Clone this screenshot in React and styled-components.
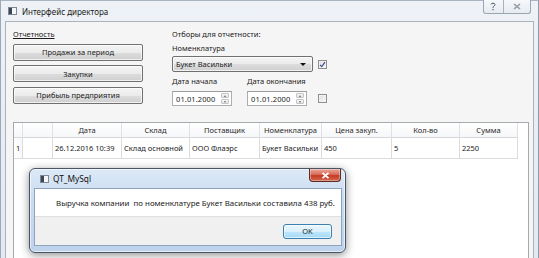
import React from 'react';
import styled, { createGlobalStyle } from 'styled-components';

const Global = createGlobalStyle`
  html, body { margin: 0; padding: 0; width: 539px; height: 258px; overflow: hidden; background: #fff; }
  body { font-family: "Noto Sans", "Open Sans", sans-serif; font-size: 7.5px; color: #1b1b1b; }
  * { box-sizing: border-box; }
`;

const Window = styled.div`
  position: relative;
  width: 539px;
  height: 258px;
  background: linear-gradient(180deg, #eef2f7 0%, #e2e9f1 100%);
  border-left: 1px solid #9aa8b8;
  border-right: 1px solid #8e9aa8;
  border-top: 1px solid #a9b5c3;
  padding: 0 4px 0 4px;
  display: flex;
  flex-direction: column;
`;

const TitleBar = styled.div`
  height: 20px;
  display: flex;
  align-items: center;
  flex-shrink: 0;
`;

const TitleIcon = styled.div`
  width: 9px;
  height: 8px;
  margin-left: 3px;
  margin-right: 5px;
  border: 1px solid #7d8894;
  background: linear-gradient(90deg, #3c4654 0 3px, #f4f6f8 3px);
`;

const TitleText = styled.span`
  font-size: 8px;
  color: #1a1a1a;
  margin-top: 1px;
`;

const TitleButtons = styled.div`
  margin-left: auto;
  margin-right: 3px;
  align-self: flex-start;
  margin-top: -1px;
  width: 48px;
  height: 14px;
  display: flex;
  border: 1px solid #9ba6b3;
  border-top: none;
  border-radius: 0 0 3px 3px;
  background: linear-gradient(180deg, #f6f8fa, #e6ebf0);
`;

const TitleBtn = styled.div`
  flex: ${p => p.$grow};
  display: flex;
  align-items: center;
  justify-content: center;
  border-right: ${p => (p.$divider ? '1px solid #a9b3bf' : 'none')};
`;

const Client = styled.div`
  flex: 1;
  background: #f5f5f5;
  border: 1px solid #a9b2bd;
  border-bottom: none;
  padding: 7px 4px 0 7px;
  display: flex;
  flex-direction: column;
  min-height: 0;
`;

const Top = styled.div`
  display: flex;
  align-items: flex-start;
  flex-shrink: 0;
`;

const LeftCol = styled.div`
  width: 130px;
  display: flex;
  flex-direction: column;
`;

const RightCol = styled.div`
  margin-left: 29px;
  display: flex;
  flex-direction: column;
`;

const Label = styled.div`
  line-height: 10px;
  height: 10px;
  white-space: nowrap;
  margin-top: ${p => p.$mt || 0}px;
  text-decoration: ${p => (p.$underline ? 'underline' : 'none')};
  text-underline-offset: 1px;
`;

const PushButton = styled.div`
  height: 17px;
  margin-top: 4.5px;
  border: 1px solid #707070;
  border-radius: 2px;
  background: linear-gradient(180deg, #f4f4f4 0%, #ebebeb 50%, #dddddd 51%, #cfcfcf 100%);
  box-shadow: inset 0 0 0 1px rgba(255, 255, 255, 0.7);
  display: flex;
  align-items: center;
  justify-content: center;
  white-space: nowrap;
`;

const FieldRow = styled.div`
  display: flex;
  align-items: center;
  margin-top: ${p => p.$mt || 0}px;
`;

const Combo = styled.div`
  width: 141px;
  height: 16px;
  border: 1px solid #707070;
  border-radius: 2px;
  background: linear-gradient(180deg, #f4f4f4 0%, #ebebeb 50%, #dddddd 51%, #cfcfcf 100%);
  box-shadow: inset 0 0 0 1px rgba(255, 255, 255, 0.7);
  display: flex;
  align-items: center;
  padding-left: 3px;
  padding-right: 6px;
`;

const ComboText = styled.span`
  flex: 1;
`;

const DropArrow = styled.span`
  width: 0;
  height: 0;
  border-left: 3px solid transparent;
  border-right: 3px solid transparent;
  border-top: 3px solid #111;
`;

const Check = styled.div`
  width: 9px;
  height: 9px;
  margin-left: ${p => p.$ml}px;
  margin-bottom: ${p => p.$mb || 0}px;
  border: 1px solid #8f8f8f;
  background: linear-gradient(135deg, #dcdcdc, #fbfbfb);
  box-shadow: inset 0 0 0 1px #f2f2f2;
  display: flex;
  align-items: center;
  justify-content: center;
  flex-shrink: 0;
`;

const DateRow = styled.div`
  display: flex;
  align-items: flex-end;
  margin-top: 4px;
`;

const DateGroup = styled.div`
  display: flex;
  flex-direction: column;
  margin-right: ${p => p.$mr || 0}px;
`;

const SpinBox = styled.div`
  width: 60px;
  height: 15px;
  margin-top: 5px;
  border: 1px solid #abadb3;
  border-top-color: #9a9ca2;
  background: #fff;
  display: flex;
  align-items: center;
  padding-left: 3px;
`;

const SpinText = styled.span`
  flex: 1;
  letter-spacing: 0.1px;
`;

const SpinButtons = styled.div`
  width: 8px;
  height: 11px;
  margin-right: 2px;
  display: flex;
  flex-direction: column;
  gap: 1px;
`;

const SpinBtn = styled.div`
  flex: 1;
  border: 1px solid #c4c4c4;
  border-radius: 1px;
  background: linear-gradient(180deg, #f8f8f8, #e4e4e4);
  display: flex;
  align-items: center;
  justify-content: center;
  &::after {
    content: '';
    border-left: 1.5px solid transparent;
    border-right: 1.5px solid transparent;
    ${p => (p.$up ? 'border-bottom: 2px solid #6b6b6b;' : 'border-top: 2px solid #6b6b6b;')}
  }
`;

const Table = styled.div`
  flex: 1;
  margin-top: 16px;
  background: #fff;
  border: 1px solid #a6a9ad;
  border-bottom: none;
  display: flex;
  flex-direction: column;
`;

const COLS = '9px 30px 69px 68px 70px 62px 70px 68px 58px';

const Row = styled.div`
  display: grid;
  grid-template-columns: ${COLS};
  height: ${p => p.$h}px;
`;

const HeadCell = styled.div`
  display: flex;
  align-items: center;
  justify-content: center;
  background: linear-gradient(180deg, #ffffff, #f6f7f9);
  border-right: 1px solid #dfe1e4;
  border-bottom: 1px solid #d5d7da;
  color: #2a2a2a;
  white-space: nowrap;
`;

const Cell = styled.div`
  display: flex;
  align-items: center;
  padding-left: 2px;
  border-right: 1px solid #dcdcdc;
  border-bottom: 1px solid #dcdcdc;
  white-space: nowrap;
  overflow: hidden;
  background: ${p => (p.$head ? 'linear-gradient(90deg,#ffffff,#f7f8fa)' : '#fff')};
`;

/* Message box (modal, lies over the table) */
const Dialog = styled.div`
  position: absolute;
  left: 28px;
  top: 167px;
  width: 317px;
  height: 85px;
  border: 1px solid #4a5566;
  border-radius: 6px;
  background: linear-gradient(180deg, #dce9f7 0%, #c8dbf0 40%, #bdd3ec 100%);
  box-shadow: 0 2px 8px rgba(0, 0, 0, 0.45), inset 0 0 0 1px rgba(255, 255, 255, 0.6);
  padding: 0 3px 6px 4px;
  display: flex;
  flex-direction: column;
`;

const DlgTitle = styled.div`
  height: 19px;
  display: flex;
  align-items: center;
  padding-left: 6px;
  position: relative;
`;

const DlgIcon = styled.div`
  width: 9px;
  height: 8px;
  margin-right: 4px;
  border: 1px solid #7d8894;
  background: linear-gradient(90deg, #3c4654 0 3px, #f4f6f8 3px);
`;

const DlgTitleText = styled.span`
  font-size: 8.3px;
  color: #111;
`;

const CloseBtn = styled.div`
  position: absolute;
  right: 1px;
  top: 0;
  width: 32px;
  height: 13px;
  border: 1px solid #5e2a24;
  border-top: none;
  border-radius: 0 0 4px 4px;
  background: linear-gradient(180deg, #eba898 0%, #d86d5a 45%, #c43b25 55%, #d6674e 100%);
  box-shadow: inset 0 0 0 1px rgba(255, 255, 255, 0.35);
  display: flex;
  align-items: center;
  justify-content: center;
`;

const DlgClient = styled.div`
  flex: 1;
  border: 1px solid #8ea3bd;
  display: flex;
  flex-direction: column;
`;

const DlgBody = styled.div`
  height: 27px;
  background: #fff;
  display: flex;
  align-items: center;
  padding-left: 21px;
  font-size: 7.9px;
  white-space: pre;
`;

const DlgFooter = styled.div`
  flex: 1;
  background: #f0f0f0;
  border-top: 1px solid #dfdfdf;
  display: flex;
  align-items: center;
  justify-content: flex-end;
  padding-right: 9px;
`;

const OkButton = styled.div`
  width: 49px;
  height: 15px;
  border: 1px solid #3c7fb1;
  border-radius: 3px;
  background: linear-gradient(180deg, #eaf6fd 0%, #d9f0fc 50%, #bee6fd 51%, #a7d9f5 100%);
  box-shadow: inset 0 0 0 1px rgba(255, 255, 255, 0.6);
  display: flex;
  align-items: center;
  justify-content: center;
`;

const CheckMark = () => (
  <svg width="7" height="7" viewBox="0 0 7 7">
    <path d="M1 3.8 L2.8 5.6 L6 1.2" fill="none" stroke="#3f4f8f" strokeWidth="1.2" />
  </svg>
);

const CloseX = () => (
  <svg width="9" height="7" viewBox="0 0 9 7">
    <path d="M1.5 0.8 L7.5 6.2 M7.5 0.8 L1.5 6.2" stroke="#fff" strokeWidth="1.8" />
  </svg>
);

const HelpIcon = () => (
  <svg width="6" height="9" viewBox="0 0 6 9">
    <path d="M1 2.5 C1 0.8 5 0.8 5 2.5 C5 4 3 4 3 5.5 L3 6" fill="none" stroke="#4b5563" strokeWidth="1" />
    <rect x="2.4" y="7" width="1.2" height="1.2" fill="#4b5563" />
  </svg>
);

const CloseGlyph = () => (
  <svg width="8" height="7" viewBox="0 0 8 7">
    <path d="M1 1 L7 6 M7 1 L1 6" stroke="#6b7480" strokeWidth="1.3" />
    <path d="M1 1 L7 6 M7 1 L1 6" stroke="#f5f7fa" strokeWidth="0.4" />
  </svg>
);

const headers = ['', '', 'Дата', 'Склад', 'Поставщик', 'Номенклатура', 'Цена закуп.', 'Кол-во', 'Сумма'];
const rows = [['1', '', '26.12.2016 10:39', 'Склад основной', 'ООО Флаэрс', 'Букет Васильки', '450', '5', '2250']];

const DateField = ({ label, mr }) => (
  <DateGroup $mr={mr}>
    <Label>{label}</Label>
    <SpinBox>
      <SpinText>01.01.2000</SpinText>
      <SpinButtons>
        <SpinBtn $up />
        <SpinBtn />
      </SpinButtons>
    </SpinBox>
  </DateGroup>
);

export default function App() {
  return (
    <>
      <Global />
      <Window>
        <TitleBar>
          <TitleIcon />
          <TitleText>Интерфейс директора</TitleText>
          <TitleButtons>
            <TitleBtn $grow={20} $divider><HelpIcon /></TitleBtn>
            <TitleBtn $grow={28}><CloseGlyph /></TitleBtn>
          </TitleButtons>
        </TitleBar>
        <Client>
          <Top>
            <LeftCol>
              <Label $underline>Отчетность</Label>
              <PushButton>Продажи за период</PushButton>
              <PushButton>Закупки</PushButton>
              <PushButton>Прибыль предприятия</PushButton>
            </LeftCol>
            <RightCol>
              <Label>Отборы для отчетности:</Label>
              <Label $mt={4}>Номенклатура</Label>
              <FieldRow $mt={3}>
                <Combo>
                  <ComboText>Букет Васильки</ComboText>
                  <DropArrow />
                </Combo>
                <Check $ml={5}><CheckMark /></Check>
              </FieldRow>
              <DateRow>
                <DateField label="Дата начала" mr={15} />
                <DateField label="Дата окончания" />
                <Check $ml={11} $mb={3} />
              </DateRow>
            </RightCol>
          </Top>
          <Table>
            <Row $h={15}>
              {headers.map((h, i) => (
                <HeadCell key={i}>{h}</HeadCell>
              ))}
            </Row>
            {rows.map((r, ri) => (
              <Row $h={21} key={ri}>
                {r.map((c, ci) => (
                  <Cell key={ci} $head={ci === 0}>{c}</Cell>
                ))}
              </Row>
            ))}
          </Table>
        </Client>
        <Dialog>
          <DlgTitle>
            <DlgIcon />
            <DlgTitleText>QT_MySql</DlgTitleText>
            <CloseBtn><CloseX /></CloseBtn>
          </DlgTitle>
          <DlgClient>
            <DlgBody>Выручка компании  по номенклатуре Букет Васильки составила 438 руб.</DlgBody>
            <DlgFooter>
              <OkButton>OK</OkButton>
            </DlgFooter>
          </DlgClient>
        </Dialog>
      </Window>
    </>
  );
}
